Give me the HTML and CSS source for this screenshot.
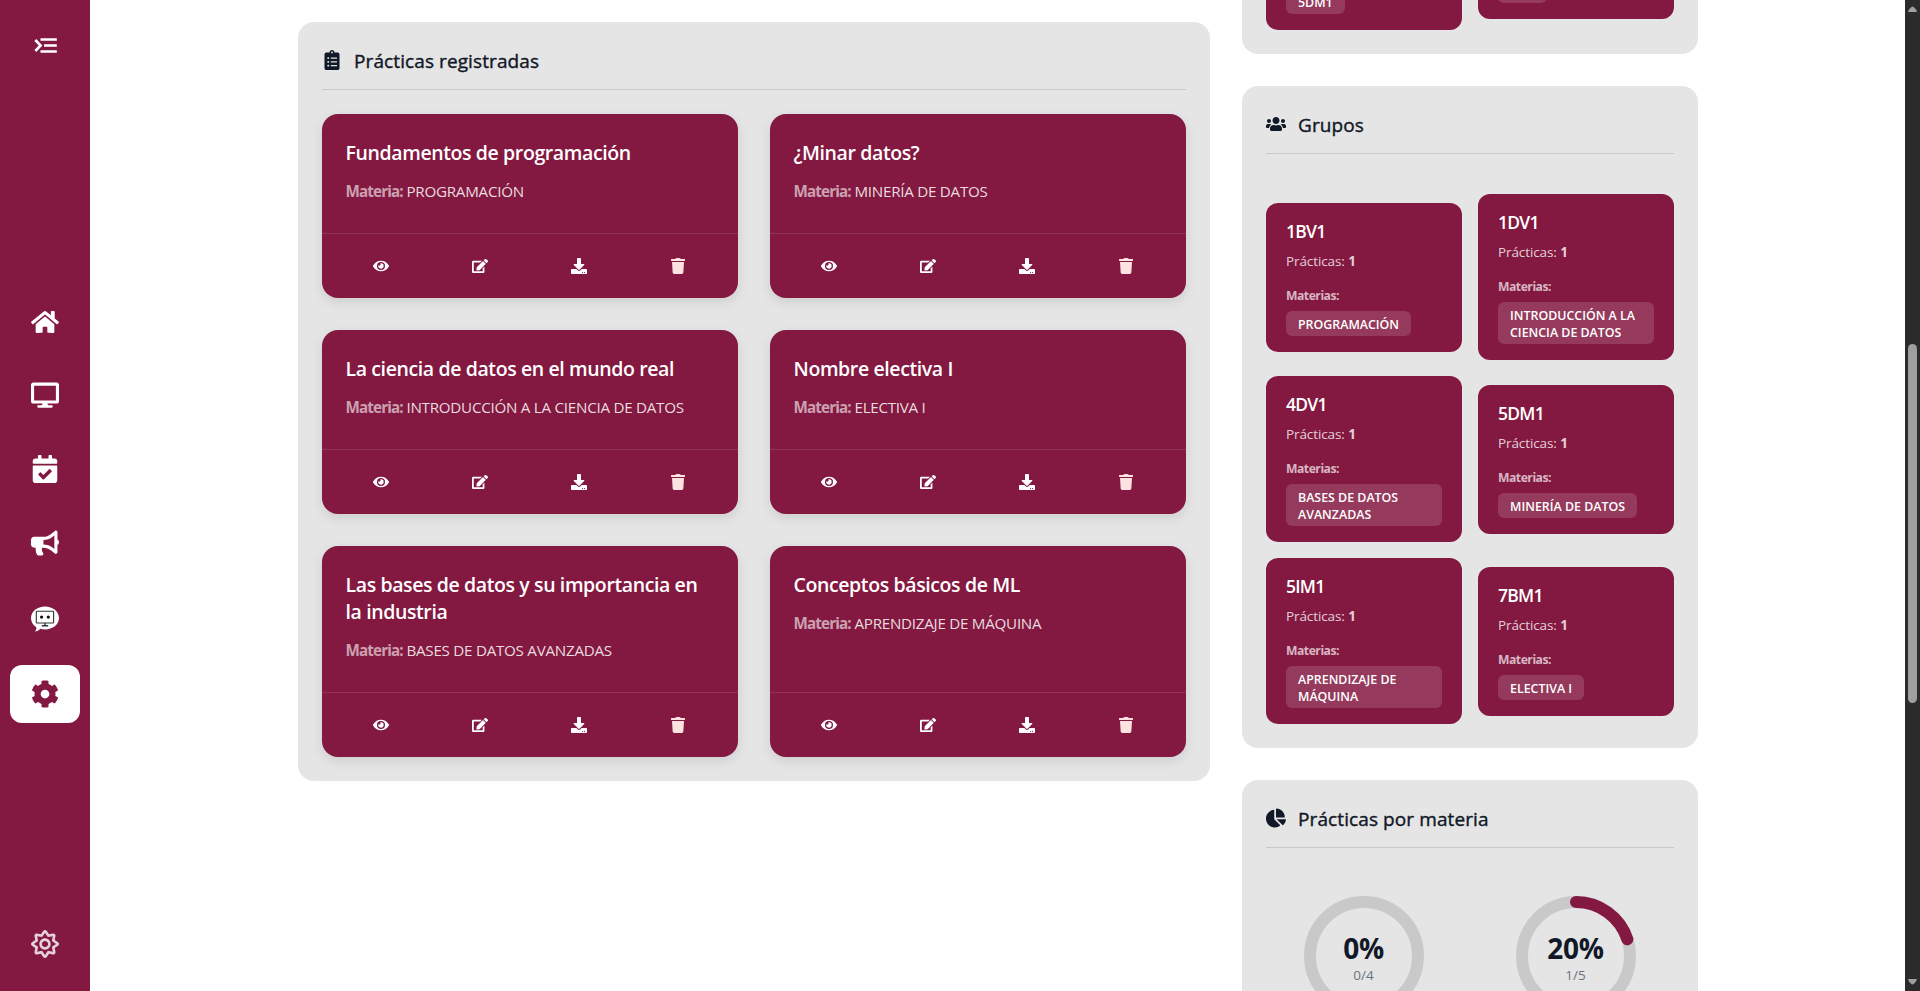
FILE: index.html
```html
<!DOCTYPE html>
<html lang="es">
<head>
<meta charset="utf-8">
<title>Panel de prácticas</title>
<link rel="stylesheet" href="styles.css">
</head>
<body>
<svg class="sprite" aria-hidden="true">
  <symbol id="i-eye" viewBox="0 0 576 512"><path d="M572.52 241.4C518.29 135.59 410.93 64 288 64S57.68 135.64 3.48 241.41a32.35 32.35 0 0 0 0 29.19C57.71 376.41 165.07 448 288 448s230.32-71.64 284.52-177.41a32.35 32.35 0 0 0 0-29.19zM288 400a144 144 0 1 1 144-144 143.93 143.93 0 0 1-144 144zm0-240a95.31 95.31 0 0 0-25.31 3.79 47.85 47.85 0 0 1-66.9 66.9A95.78 95.78 0 1 0 288 160z"/></symbol>
  <symbol id="i-edit" viewBox="0 0 576 512"><path d="M402.6 83.2l90.2 90.2c3.8 3.8 3.8 10 0 13.8L274.4 405.6l-92.8 10.3c-12.4 1.4-22.9-9.1-21.5-21.5l10.3-92.8L388.8 83.2c3.8-3.8 10-3.8 13.8 0zm162-22.9l-48.8-48.8c-15.2-15.2-39.9-15.2-55.2 0l-35.4 35.4c-3.8 3.8-3.8 10 0 13.8l90.2 90.2c3.8 3.8 10 3.8 13.8 0l35.4-35.4c15.2-15.3 15.2-40 0-55.2zM384 346.2V448H64V128h229.8c3.2 0 6.2-1.3 8.5-3.5l40-40c7.6-7.6 2.2-20.5-8.5-20.5H48C21.5 64 0 85.5 0 112v352c0 26.5 21.5 48 48 48h352c26.5 0 48-21.5 48-48V306.2c0-10.7-12.9-16-20.5-8.5l-40 40c-2.2 2.3-3.5 5.3-3.5 8.5z"/></symbol>
  <symbol id="i-download" viewBox="0 0 512 512"><path d="M216 0h80c13.3 0 24 10.7 24 24v168h87.7c17.8 0 26.7 21.5 14.1 34.1L269.7 378.3c-7.5 7.5-19.8 7.5-27.3 0L90.1 226.1c-12.6-12.6-3.7-34.1 14.1-34.1H192V24c0-13.3 10.7-24 24-24zm296 376v112c0 13.3-10.7 24-24 24H24c-13.3 0-24-10.7-24-24V376c0-13.3 10.7-24 24-24h146.7l49 49c20.1 20.1 52.5 20.1 72.6 0l49-49H488c13.3 0 24 10.7 24 24zm-124 88c0-11-9-20-20-20s-20 9-20 20 9 20 20 20 20-9 20-20zm64 0c0-11-9-20-20-20s-20 9-20 20 9 20 20 20 20-9 20-20z"/></symbol>
  <symbol id="i-trash" viewBox="0 0 448 512"><path d="M432 32H312l-9.4-18.7A24 24 0 0 0 281.1 0H166.8a23.72 23.72 0 0 0-21.4 13.3L136 32H16A16 16 0 0 0 0 48v32a16 16 0 0 0 16 16h416a16 16 0 0 0 16-16V48a16 16 0 0 0-16-16zM53.2 467a48 48 0 0 0 47.9 45h245.8a48 48 0 0 0 47.9-45L416 128H32z"/></symbol>
</svg>
<div class="app">
  <nav class="sidebar">
    <svg class="menu-toggle" viewBox="0 0 24 18" fill="none" stroke="currentColor"><path stroke-width="2.400" d="M6.500 2.500h16.300M10 8.500h12.800M6.500 14.500h16.300"/><path stroke-width="2.600" d="M1.300 3l5.300 5.500-5.300 5.500"/></svg>
    <div class="nav-items">
      <a class="nav-item"><svg viewBox="0 0 576 512"><path d="M280.37 148.26L96 300.11V464a16 16 0 0 0 16 16l112.06-.29a16 16 0 0 0 15.92-16V368a16 16 0 0 1 16-16h64a16 16 0 0 1 16 16v95.64a16 16 0 0 0 16 16.05L464 480a16 16 0 0 0 16-16V300L295.67 148.26a12.19 12.19 0 0 0-15.3 0zM571.6 251.47L488 182.56V44.05a12 12 0 0 0-12-12h-56a12 12 0 0 0-12 12v72.61L318.47 43a48 48 0 0 0-61 0L4.34 251.47a12 12 0 0 0-1.6 16.9l25.5 31A12 12 0 0 0 45.15 301l235.22-193.74a12.19 12.19 0 0 1 15.3 0L530.9 301a12 12 0 0 0 16.9-1.6l25.5-31a12 12 0 0 0-1.7-16.93z"/></svg></a>
      <a class="nav-item monitor"><svg viewBox="0 0 576 512"><path d="M528 0H48C21.5 0 0 21.5 0 48v336c0 26.5 21.5 48 48 48h192l-16 36h-72c-13.3 0-24 10.7-24 24s10.7 24 24 24h272c13.3 0 24-10.7 24-24s-10.7-24-24-24h-72l-16-36h192c26.5 0 48-21.5 48-48V48c0-26.5-21.5-48-48-48zm-16 368H64V64h448v304z"/></svg></a>
      <a class="nav-item"><svg viewBox="0 0 448 512"><path d="M436 160H12c-6.627 0-12-5.373-12-12v-36c0-26.51 21.49-48 48-48h48V12c0-6.627 5.373-12 12-12h40c6.627 0 12 5.373 12 12v52h128V12c0-6.627 5.373-12 12-12h40c6.627 0 12 5.373 12 12v52h48c26.51 0 48 21.49 48 48v36c0 6.627-5.373 12-12 12zM12 192h424c6.627 0 12 5.373 12 12v260c0 26.51-21.49 48-48 48H48c-26.51 0-48-21.49-48-48V204c0-6.627 5.373-12 12-12zm333.296 95.947l-28.169-28.398c-4.667-4.705-12.265-4.736-16.97-.068L194.12 364.665l-45.98-46.352c-4.667-4.705-12.266-4.736-16.971-.068l-28.397 28.17c-4.705 4.667-4.736 12.265-.068 16.97l82.601 83.269c4.667 4.705 12.265 4.736 16.97.068l142.953-141.805c4.705-4.667 4.736-12.265.068-16.97z"/></svg></a>
      <a class="nav-item"><svg viewBox="0 0 576 512"><path d="M576 240c0-23.63-12.95-44.04-32-55.12V32.01C544 23.26 537.02 0 512 0c-7.12 0-14.19 2.38-19.98 7.02l-85.03 68.03C364.28 109.19 310.66 128 256 128H64c-35.35 0-64 28.65-64 64v96c0 35.35 28.65 64 64 64h33.7c-1.39 10.48-2.18 21.14-2.18 32 0 39.77 9.26 77.35 25.56 110.94 5.19 10.69 16.52 17.06 28.4 17.06h74.28c26.05 0 41.69-29.84 25.9-50.56-16.4-21.52-26.15-48.36-26.15-77.44 0-11.11 1.62-21.79 4.41-32H256c54.66 0 108.28 18.81 150.98 52.95l85.03 68.03a32.023 32.023 0 0 0 19.98 7.02c24.92 0 32-22.78 32-32V295.13C563.05 284.04 576 263.63 576 240zm-96 141.42l-33.05-26.44C392.95 311.78 325.12 288 256 288v-96c69.12 0 136.95-23.78 190.95-66.98L480 98.58v282.84z"/></svg></a>
      <a class="nav-item bot"><svg viewBox="0 0 28 28"><path d="M14 1.5c7.800 0 14 5.100 14 11.500s-6.200 11.500-14 11.500c-1.700 0-3.200-.2-4.700-.7C7.700 25.600 5.900 26.400 4 26.400c1-1 1.500-2.600 1.300-4.100C2 20.100 0 16.800 0 13 0 6.600 6.200 1.500 14 1.500z"/><g fill="none" stroke="#333" stroke-width="1.100"><rect x="5.300" y="6.200" width="17.300" height="11.800" rx=".6"/><path d="M10.800 20.800h6.400M14 18v2.800" stroke-width="1.400"/></g><circle cx="10.600" cy="12.100" r="1.600" fill="#111"/><circle cx="17.300" cy="12.100" r="1.600" fill="#111"/></svg></a>
      <a class="nav-item active"><svg viewBox="0 0 512 512"><path d="M487.4 315.7l-42.6-24.6c4.3-23.2 4.3-47 0-70.2l42.6-24.6c4.9-2.8 7.1-8.6 5.5-14-11.1-35.6-30-67.8-54.7-94.6-3.8-4.1-10-5.1-14.8-2.3L380.800 110c-17.900-15.400-38.500-27.300-60.800-35.100V25.800c0-5.600-3.900-10.500-9.400-11.700-36.700-8.200-74.300-7.800-109.200 0-5.500 1.200-9.400 6.100-9.400 11.700V75c-22.200 7.900-42.800 19.800-60.800 35.100L88.700 85.500c-4.900-2.800-11-1.900-14.800 2.300-24.700 26.700-43.600 58.900-54.700 94.600-1.700 5.400.6 11.200 5.500 14L67.300 221c-4.300 23.200-4.300 47 0 70.200l-42.600 24.600c-4.900 2.800-7.100 8.600-5.500 14 11.100 35.600 30 67.800 54.700 94.600 3.800 4.100 10 5.100 14.800 2.300l42.600-24.600c17.900 15.400 38.500 27.300 60.800 35.100v49.200c0 5.600 3.900 10.500 9.400 11.700 36.700 8.200 74.300 7.800 109.200 0 5.500-1.200 9.400-6.100 9.400-11.700v-49.200c22.200-7.900 42.800-19.800 60.800-35.100l42.600 24.600c4.900 2.800 11 1.900 14.800-2.300 24.700-26.700 43.600-58.900 54.700-94.600 1.500-5.500-.7-11.300-5.600-14.100zM256 336c-44.100 0-80-35.900-80-80s35.900-80 80-80 80 35.900 80 80-35.900 80-80 80z"/></svg></a>
    </div>
    <svg class="theme-toggle" viewBox="0 0 512 512"><path d="M494.2 221.9l-59.8-40.5 13.7-71c2.6-13.2-1.6-26.8-11.1-36.4-9.6-9.5-23.2-13.7-36.2-11.1l-70.9 13.700-40.400-59.900c-15.100-22.300-51.900-22.300-67 0l-40.400 59.900-70.800-13.700C98 60.400 84.500 64.500 75 74.100c-9.500 9.600-13.700 23.100-11.100 36.300l13.700 71-59.800 40.500C6.600 229.500 0 242 0 255.500s6.700 26 17.800 33.500l59.800 40.500-13.700 71c-2.600 13.200 1.600 26.800 11.100 36.300 9.500 9.500 22.900 13.700 36.300 11.100l70.800-13.700 40.400 59.900C230 505.300 242.600 512 256 512s26-6.700 33.500-17.800l40.400-59.900 70.900 13.700c13.400 2.700 26.800-1.600 36.300-11.100 9.500-9.500 13.600-23.100 11.100-36.300l-13.700-71 59.800-40.500c11.100-7.500 17.800-20.100 17.800-33.600-.1-13.600-6.700-26.100-17.900-33.700zm-112.900 85.600l17.600 91.200-91-17.600L256 458l-51.900-77-90.900 17.600 17.600-91.200-76.800-52 76.800-52-17.600-91.200 91 17.600L256 53l51.900 76.900 91-17.600-17.600 91.100 76.800 52-76.800 52.100zM256 152c-57.300 0-104 46.700-104 104s46.700 104 104 104 104-46.700 104-104-46.700-104-104-104zm0 160c-30.900 0-56-25.100-56-56s25.100-56 56-56 56 25.100 56 56-25.100 56-56 56z"/></svg>
  </nav>

  <main class="content">
    <section class="panel practices">
      <header class="panel-head">
        <svg viewBox="0 0 384 512"><path d="M336 64h-80c0-35.300-28.700-64-64-64s-64 28.700-64 64H48C21.500 64 0 85.500 0 112v352c0 26.500 21.500 48 48 48h288c26.500 0 48-21.500 48-48V112c0-26.500-21.500-48-48-48zM96 424c-13.300 0-24-10.700-24-24s10.700-24 24-24 24 10.700 24 24-10.700 24-24 24zm0-96c-13.300 0-24-10.700-24-24s10.700-24 24-24 24 10.700 24 24-10.700 24-24 24zm0-96c-13.300 0-24-10.700-24-24s10.700-24 24-24 24 10.700 24 24-10.700 24-24 24zm96-192c13.300 0 24 10.700 24 24s-10.700 24-24 24-24-10.700-24-24 10.700-24 24-24zm128 368c0 4.400-3.600 8-8 8H168c-4.400 0-8-3.600-8-8v-16c0-4.400 3.600-8 8-8h144c4.400 0 8 3.600 8 8v16zm0-96c0 4.400-3.600 8-8 8H168c-4.400 0-8-3.600-8-8v-16c0-4.400 3.600-8 8-8h144c4.400 0 8 3.600 8 8v16zm0-96c0 4.400-3.600 8-8 8H168c-4.400 0-8-3.600-8-8v-16c0-4.400 3.600-8 8-8h144c4.400 0 8 3.600 8 8v16z"/></svg>
        <h2>Prácticas registradas</h2>
      </header>
      <div class="practice-grid">
        <article class="practice"><div class="practice-body"><h3>Fundamentos de programación</h3><p><b>Materia:</b> PROGRAMACIÓN</p></div><div class="actions"><svg><use href="#i-eye"/></svg><svg><use href="#i-edit"/></svg><svg><use href="#i-download"/></svg><svg class="danger"><use href="#i-trash"/></svg></div></article>
        <article class="practice"><div class="practice-body"><h3>¿Minar datos?</h3><p><b>Materia:</b> MINERÍA DE DATOS</p></div><div class="actions"><svg><use href="#i-eye"/></svg><svg><use href="#i-edit"/></svg><svg><use href="#i-download"/></svg><svg class="danger"><use href="#i-trash"/></svg></div></article>
        <article class="practice"><div class="practice-body"><h3>La ciencia de datos en el mundo real</h3><p><b>Materia:</b> INTRODUCCIÓN A LA CIENCIA DE DATOS</p></div><div class="actions"><svg><use href="#i-eye"/></svg><svg><use href="#i-edit"/></svg><svg><use href="#i-download"/></svg><svg class="danger"><use href="#i-trash"/></svg></div></article>
        <article class="practice"><div class="practice-body"><h3>Nombre electiva I</h3><p><b>Materia:</b> ELECTIVA I</p></div><div class="actions"><svg><use href="#i-eye"/></svg><svg><use href="#i-edit"/></svg><svg><use href="#i-download"/></svg><svg class="danger"><use href="#i-trash"/></svg></div></article>
        <article class="practice"><div class="practice-body"><h3>Las bases de datos y su importancia en<br>la industria</h3><p><b>Materia:</b> BASES DE DATOS AVANZADAS</p></div><div class="actions"><svg><use href="#i-eye"/></svg><svg><use href="#i-edit"/></svg><svg><use href="#i-download"/></svg><svg class="danger"><use href="#i-trash"/></svg></div></article>
        <article class="practice"><div class="practice-body"><h3>Conceptos básicos de ML</h3><p><b>Materia:</b> APRENDIZAJE DE MÁQUINA</p></div><div class="actions"><svg><use href="#i-eye"/></svg><svg><use href="#i-edit"/></svg><svg><use href="#i-download"/></svg><svg class="danger"><use href="#i-trash"/></svg></div></article>
      </div>
    </section>

    <aside class="side">
      <section class="panel clipped">
        <div class="clip-card"><span class="tag">5DM1</span></div>
        <div class="clip-card short"><span class="tag"></span></div>
      </section>

      <section class="panel">
        <header class="panel-head">
          <svg viewBox="0 0 640 512"><path d="M96 224c35.300 0 64-28.700 64-64s-28.700-64-64-64-64 28.700-64 64 28.700 64 64 64zm448 0c35.300 0 64-28.700 64-64s-28.700-64-64-64-64 28.700-64 64 28.700 64 64 64zm32 32h-64c-17.600 0-33.500 7.100-45.100 18.600 40.300 22.100 68.900 62 75.100 109.400h66c17.700 0 32-14.300 32-32v-32c0-35.300-28.700-64-64-64zm-256 0c61.900 0 112-50.100 112-112S381.900 32 320 32 208 82.100 208 144s50.100 112 112 112zm76.800 32h-8.300c-20.800 10-43.900 16-68.500 16s-47.600-6-68.500-16h-8.300C179.600 288 128 339.600 128 403.200V432c0 26.500 21.500 48 48 48h288c26.500 0 48-21.500 48-48v-28.800c0-63.600-51.600-115.200-115.200-115.200zm-223.700-13.400C161.500 263.100 145.600 256 128 256H64c-35.300 0-64 28.700-64 64v32c0 17.700 14.300 32 32 32h65.900c6.300-47.400 34.900-87.300 75.200-109.400z"/></svg>
          <h2>Grupos</h2>
        </header>
        <div class="group-grid">
          <article class="group"><h3>1BV1</h3><p>Prácticas: <b>1</b></p><h4>Materias:</h4><span class="tag">PROGRAMACIÓN</span></article>
          <article class="group"><h3>1DV1</h3><p>Prácticas: <b>1</b></p><h4>Materias:</h4><span class="tag wide">INTRODUCCIÓN A LA<br>CIENCIA DE DATOS</span></article>
          <article class="group"><h3>4DV1</h3><p>Prácticas: <b>1</b></p><h4>Materias:</h4><span class="tag wide">BASES DE DATOS<br>AVANZADAS</span></article>
          <article class="group"><h3>5DM1</h3><p>Prácticas: <b>1</b></p><h4>Materias:</h4><span class="tag">MINERÍA DE DATOS</span></article>
          <article class="group"><h3>5IM1</h3><p>Prácticas: <b>1</b></p><h4>Materias:</h4><span class="tag wide">APRENDIZAJE DE<br>MÁQUINA</span></article>
          <article class="group"><h3>7BM1</h3><p>Prácticas: <b>1</b></p><h4>Materias:</h4><span class="tag">ELECTIVA I</span></article>
        </div>
      </section>

      <section class="panel">
        <header class="panel-head">
          <svg viewBox="0 0 544 512"><path d="M527.790 288H290.500l158.030 158.030c6.040 6.040 15.980 6.530 22.190.68 38.700-36.460 65.320-85.610 73.130-140.860 1.340-9.460-6.510-17.850-16.060-17.850zm-15.830-64.800C503.720 103.740 408.260 8.280 288.800.04 279.680-.59 272 7.100 272 16.240V240h223.770c9.140 0 16.820-7.680 16.190-16.800zM224 288V50.710c0-9.550-8.390-17.400-17.840-16.060C86.990 51.490-4.100 155.600.14 280.370 4.500 408.510 114.830 513.590 243.030 511.980c50.400-.63 96.970-16.870 135.260-44.030 7.900-5.600 8.420-17.230 1.570-24.080L224 288z"/></svg>
          <h2>Prácticas por materia</h2>
        </header>
        <div class="charts">
          <div class="chart"><svg viewBox="0 0 120 120"><circle class="track" cx="60" cy="60" r="54"/></svg><div class="chart-label"><strong>0%</strong><span>0/4</span></div></div>
          <div class="chart"><svg viewBox="0 0 120 120"><circle class="track" cx="60" cy="60" r="54"/><path class="value" d="M60 6A54 54 0 0 1 111.360 43.310"/></svg><div class="chart-label"><strong>20%</strong><span>1/5</span></div></div>
        </div>
      </section>
    </aside>
  </main>

  <div class="scrollbar">
    <svg class="arrow" viewBox="0 0 9 6"><path d="M4.500.5Q5.500.5 8 3.500L9 6H0L1 3.500Q3.500.5 4.500.5z"/></svg>
    <div class="thumb"></div>
    <svg class="arrow down" viewBox="0 0 9 6"><path d="M4.500.5Q5.500.5 8 3.500L9 6H0L1 3.500Q3.500.5 4.500.5z"/></svg>
  </div>
</div>
</body>
</html>
```
FILE: styles.css
```css
:root {
  --wine: #831840;
  --panel: #e5e5e5;
  --ink: #111827;
}
* { box-sizing: border-box; margin: 0; }
body {
  font-family: "Open Sans", "Noto Sans", sans-serif;
  color: var(--ink);
  background: #fff;
  height: 991px;
  overflow: hidden;
}
.sprite { position: absolute; width: 0; height: 0; }
.app { display: flex; height: 991px; overflow: hidden; }

.sidebar {
  width: 90px;
  flex: none;
  background: var(--wine);
  color: #fff;
  display: flex;
  flex-direction: column;
  align-items: center;
  padding: 37px 10px 33px;
}
.sidebar svg { fill: currentColor; display: block; }
.menu-toggle { width: 24px; height: 18px; margin-left: 1px; }
.sidebar .menu-toggle { fill: none; }
.nav-items { display: flex; flex-direction: column; gap: 15.7px; margin-top: 238px; width: 100%; }
.nav-item { height: 58px; display: flex; align-items: center; justify-content: center; border-radius: 12px; }
.nav-item svg { width: 28px; height: 28px; overflow: visible; }
.nav-item.monitor { padding-bottom: 1px; }
.nav-item.bot { margin-top: 2.5px; }
.nav-item.active { margin-top: 1.5px; background: #fff; color: var(--wine); }
.theme-toggle { width: 28px; height: 28px; margin-top: auto; opacity: .8; }

.content { flex: 1; display: flex; gap: 32px; padding-left: 208px; align-items: flex-start; }
.panel { background: var(--panel); border-radius: 16px; padding: 24px; }
.practices { width: 912px; margin-top: 22px; }
.panel-head {
  display: flex;
  align-items: center;
  gap: 12px;
  height: 44px;
  padding-bottom: 16px;
  border-bottom: 1px solid #c9c9c9;
}
.panel-head svg { width: 20px; height: 20px; fill: currentColor; }
.panel-head h2 {
  font-size: 19px;
  line-height: 27px;
  font-weight: 400;
  letter-spacing: .1px;
  padding-top: 3px;
  -webkit-text-stroke: .4px currentColor;
}

.practice-grid { display: grid; grid-template-columns: 1fr 1fr; gap: 32px; margin-top: 24px; }
.practice {
  background: var(--wine);
  color: #fff;
  border-radius: 16px;
  box-shadow: 0 4px 12px rgba(0, 0, 0, .1);
  display: flex;
  flex-direction: column;
}
.practice-body { flex: 1; padding: 25px 24px 30.5px 23.5px; }
.practice h3 { font-size: 19.5px; line-height: 27px; font-weight: 600; letter-spacing: -.39px; white-space: nowrap; }
.practice p { font-size: 15.2px; line-height: 24px; margin-top: 12.5px; letter-spacing: -.27px; color: rgba(255, 255, 255, .85); white-space: nowrap; }
.practice p b { font-weight: 700; letter-spacing: -.85px; color: rgba(255, 255, 255, .6); }
.actions {
  height: 65px;
  padding: 0 11px 0 9px;
  border-top: 1px solid rgba(255, 255, 255, .12);
  display: grid;
  grid-template-columns: repeat(4, 1fr);
  align-items: center;
  justify-items: center;
}
.actions svg { width: 16px; height: 16px; fill: #fff; }
.actions .danger { fill: #fee2e2; }

.side { width: 456px; display: flex; flex-direction: column; gap: 32px; }
.clipped {
  height: 54px;
  padding: 0 24px;
  border-radius: 0 0 16px 16px;
  display: grid;
  grid-template-columns: 1fr 1fr;
  gap: 16px;
  align-items: start;
  overflow: hidden;
}
.clip-card {
  height: 30px;
  overflow: hidden;
  background: var(--wine);
  border-radius: 0 0 12px 12px;
  padding: 0 20px 16px;
  display: flex;
  align-items: flex-end;
}
.clip-card.short { height: 19px; }
.clip-card.short .tag { width: 49px; height: 25px; }

.group-grid { display: grid; grid-template-columns: 1fr 1fr; gap: 16px; margin-top: 40px; align-items: center; }
.group { background: var(--wine); color: #fff; border-radius: 12px; padding: 16px 20px; }
.group h3 { font-size: 17.5px; line-height: 24px; font-weight: 600; letter-spacing: -.75px; }
.group p { font-size: 13.5px; line-height: 20px; margin-top: 8px; letter-spacing: -.1px; color: rgba(255, 255, 255, .8); }
.group p b { font-weight: 700; }
.group h4 { font-size: 12.2px; line-height: 18px; margin-top: 16px; font-weight: 700; letter-spacing: -.5px; color: rgba(255, 255, 255, .7); }
.tag {
  display: block;
  width: fit-content;
  color: #fff;
  background: rgba(255, 255, 255, .15);
  border-radius: 6px;
  padding: 5px 12px 3px;
  font-size: 12.4px;
  line-height: 17px;
  font-weight: 600;
  white-space: nowrap;
}
.group .tag { margin-top: 6px; }
.tag.wide { width: 100%; }

.charts { display: grid; grid-template-columns: 1fr 1fr; gap: 16px; margin-top: 40px; padding-top: 8px; justify-items: center; }
.chart { display: grid; width: 120px; height: 120px; }
.chart svg, .chart-label { grid-area: 1 / 1; }
.track, .value { fill: none; stroke-width: 12; stroke: #c9c9c9; }
.value { stroke: var(--wine); stroke-linecap: round; }
.chart-label { display: flex; flex-direction: column; align-items: center; justify-content: center; padding: 4px 1px 0 0; }
.chart-label strong { font-size: 28px; line-height: 34px; font-weight: 700; letter-spacing: -.3px; }
.chart-label span { font-size: 13.5px; line-height: 21px; color: #6b7280; }

.scrollbar {
  width: 15px;
  background: #2b2b2b;
  display: flex;
  flex-direction: column;
  align-items: center;
  padding: 6px 3px;
}
.thumb { width: 9px; height: 359px; border-radius: 4.5px; background: #9f9f9f; margin-top: 332px; }
.arrow { width: 9px; height: 6px; fill: #9f9f9f; }
.arrow.down { transform: rotate(180deg); margin-top: auto; }
```
